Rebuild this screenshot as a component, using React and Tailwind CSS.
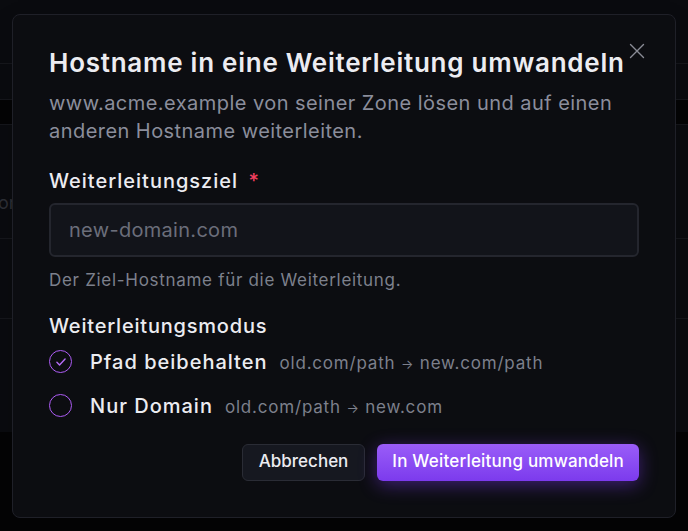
import React, { useState } from 'react';

const font = { fontFamily: 'Inter, "Noto Sans", sans-serif' };

const modes = [
    { id: 'keep', label: 'Pfad beibehalten', hint: 'old.com/path', target: 'new.com/path' },
    { id: 'domain', label: 'Nur Domain', hint: 'old.com/path', target: 'new.com' },
];

const Radio = ({ checked }) => (
    <span className="flex h-[23px] w-[23px] shrink-0 items-center justify-center rounded-full border-[1.5px] border-[#ad5cf5]">
        {checked && (
            <svg width="14" height="14" viewBox="0 0 24 24" fill="none" stroke="#b56cf7" strokeWidth="2.4" strokeLinecap="round" strokeLinejoin="round">
                <path d="M5 12.5l4.5 4.5L19 7" />
            </svg>
        )}
    </span>
);

const BackgroundPage = () => (
    <div className="h-[531px] w-full bg-[#0d0e13] text-[#3a3c45]">
        <div className="h-[64px] border-b border-[#1c1d24]" />
        <div className="h-[36px] border-b border-[#1c1d24]" />
        <div className="h-[24px] bg-[#050507]" />
        <div className="h-[114px] border-t border-[#1c1d24] pt-[66px] text-lg leading-6">
            <span className="-ml-[2px]">or</span>
        </div>
        <div className="h-[80px] border-t border-[#1c1d24]" />
        <div className="h-[114px] border-t border-[#1c1d24]" />
        <div className="h-[99px] bg-[#050507]" />
    </div>
);

export default function App() {
    const [mode, setMode] = useState('keep');

    return (
        <div className="relative h-[531px] w-[688px] overflow-hidden" style={font}>
            <BackgroundPage />

            <div className="absolute inset-0 flex items-center justify-center bg-black/20">
                <div className="relative w-[664px] rounded-lg border border-[#1f2028] bg-[#0c0d11] px-9 pt-8 pb-9 shadow-2xl">
                    <button className="absolute right-[30px] top-[28px] text-[#8a8c96]">
                        <svg width="16" height="16" viewBox="0 0 16 16" fill="none" stroke="currentColor" strokeWidth="1.4" strokeLinecap="round">
                            <path d="M1.5 1.5l13 13M14.5 1.5l-13 13" />
                        </svg>
                    </button>

                    <h2 className="text-[26px] font-semibold leading-8 tracking-[0.75px] text-[#ececf1]">
                        Hostname in eine Weiterleitung umwandeln
                    </h2>
                    <p className="mt-[10px] text-[20px] leading-7 tracking-[0.45px] text-[#8b8e9c]">
                        www.acme.example von seiner Zone lösen und auf einen anderen Hostname weiterleiten.
                    </p>

                    <label className="mt-[22px] block text-[20px] font-medium leading-7 tracking-[1px] text-[#ececf1]">
                        Weiterleitungsziel <span className="ml-1 text-[#f43f5e]">*</span>
                    </label>
                    <input
                        placeholder="new-domain.com"
                        className="mt-2 block h-[54px] w-full rounded-md border-2 border-[#24262e] bg-[#12141a] px-[18px] text-[20px] tracking-[0.3px] text-[#ececf1] placeholder-[#6b6e7a] outline-none"
                    />
                    <p className="mt-[11px] text-[17px] leading-6 tracking-[0.7px] text-[#7d808c]">Der Ziel-Hostname für die Weiterleitung.</p>

                    <p className="mt-5 text-[20px] font-medium leading-7 tracking-[0.8px] text-[#ececf1]">Weiterleitungsmodus</p>
                    <div className="mt-2 flex flex-col gap-4">
                        {modes.map((m) => (
                            <button key={m.id} onClick={() => setMode(m.id)} className="flex h-7 items-center gap-[18px] text-left">
                                <Radio checked={mode === m.id} />
                                <span className="flex items-baseline gap-3">
                                    <span className="text-[20px] font-medium tracking-[1px] text-[#ececf1]">{m.label}</span>
                                    <span className="text-[17px] tracking-[0.8px] text-[#7d808c]">
                                        {m.hint} <span className="text-[13px]">→</span> {m.target}
                                    </span>
                                </span>
                            </button>
                        ))}
                    </div>

                    <div className="mt-6 flex justify-end gap-3">
                        <button className="h-[37px] rounded-md border border-[#2a2c35] bg-[#161820] px-4 text-[17px] font-medium text-[#ececf1]">
                            Abbrechen
                        </button>
                        <button className="h-[37px] rounded-md bg-gradient-to-b from-[#9a5cf8] to-[#7c3aed] px-[15px] text-[17px] font-medium tracking-[0.2px] text-white shadow-[0_4px_18px_rgba(124,58,237,0.45)]">
                            In Weiterleitung umwandeln
                        </button>
                    </div>
                </div>
            </div>
        </div>
    );
}
